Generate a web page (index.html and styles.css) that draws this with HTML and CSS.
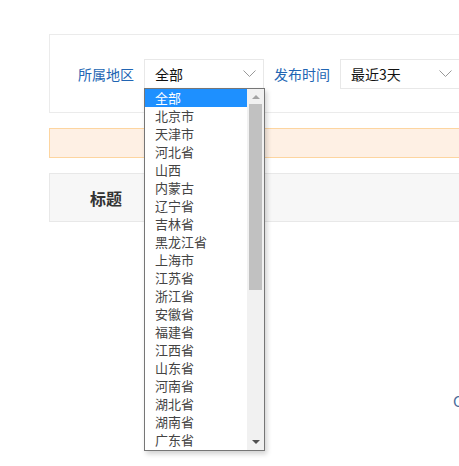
FILE: index.html
```html
<!DOCTYPE html>
<html lang="zh-CN">
<head>
    <meta charset="UTF-8">
    <meta name="viewport" content="width=device-width, initial-scale=1.0">
    <title>信息列表</title>
    <link rel="stylesheet" href="styles.css">
</head>
<body>
    <div class="page">

        <!-- 筛选条件 -->
        <div class="filter">
            <span class="filter-label">所属地区</span>
            <div class="select-wrap">
                <div class="select">
                    <span>全部</span>
                    <svg class="chevron" width="13" height="8" viewBox="0 0 13 8"><path d="M0.5 0.5 L6.5 6.5 L12.5 0.5" fill="none" stroke="#999" stroke-width="1"/></svg>
                </div>
                <div class="dropdown">
                    <ul class="options">
                        <li class="active">全部</li>
                        <li>北京市</li>
                        <li>天津市</li>
                        <li>河北省</li>
                        <li>山西</li>
                        <li>内蒙古</li>
                        <li>辽宁省</li>
                        <li>吉林省</li>
                        <li>黑龙江省</li>
                        <li>上海市</li>
                        <li>江苏省</li>
                        <li>浙江省</li>
                        <li>安徽省</li>
                        <li>福建省</li>
                        <li>江西省</li>
                        <li>山东省</li>
                        <li>河南省</li>
                        <li>湖北省</li>
                        <li>湖南省</li>
                        <li>广东省</li>
                    </ul>
                    <div class="scrollbar">
                        <div class="arrow arrow-up"></div>
                        <div class="thumb"></div>
                        <div class="arrow arrow-down"></div>
                    </div>
                </div>
            </div>
            <span class="filter-label">发布时间</span>
            <div class="select-wrap">
                <div class="select">
                    <span>最近3天</span>
                    <svg class="chevron" width="13" height="8" viewBox="0 0 13 8"><path d="M0.5 0.5 L6.5 6.5 L12.5 0.5" fill="none" stroke="#999" stroke-width="1"/></svg>
                </div>
            </div>
        </div>

        <!-- 提示条 -->
        <div class="notice"></div>

        <!-- 表头 -->
        <div class="table-head">
            <span class="th-title">标题</span>
        </div>

        <div class="pager">C</div>
    </div>
</body>
</html>
```

FILE: styles.css
```css
html, body {
    height: 100%;
}
body {
    margin: 0;
    overflow: hidden;
    background: #fff;
    font-family: "Noto Sans CJK SC", "Microsoft YaHei", sans-serif;
    color: #333;
}
.page {
    box-sizing: border-box;
    width: 1000px;
    min-height: 466px;
    padding: 34px 0 0 49px;
}
.filter {
    display: flex;
    align-items: center;
    gap: 10px;
    border: 1px solid #ebebeb;
    padding: 24px 28px 23px;
}
.filter-label {
    font-size: 14px;
    color: #2165b3;
    line-height: 30px;
}
.select-wrap {
    position: relative;
}
.select {
    box-sizing: border-box;
    width: 120px;
    height: 30px;
    border: 1px solid #e8e8e8;
    display: flex;
    align-items: center;
    justify-content: space-between;
    padding: 0 7px 0 10px;
    font-size: 14px;
    color: #111;
}
.chevron {
    display: block;
}
.dropdown {
    position: absolute;
    top: 29px;
    left: 0;
    z-index: 10;
    box-sizing: border-box;
    width: 121px;
    height: 363px;
    border: 1px solid #767676;
    background: #fff;
    display: flex;
    box-shadow: 2px 3px 5px rgba(0, 0, 0, 0.18);
}
.options {
    flex: 1;
    list-style: none;
    margin: 0;
    padding: 0;
}
.options li {
    height: 18px;
    line-height: 18px;
    padding-left: 10px;
    font-size: 13px;
    color: #444;
}
.options li.active {
    background: #1e90ff;
    color: #fff;
}
.scrollbar {
    width: 17px;
    background: #f1f1f1;
    display: flex;
    flex-direction: column;
    align-items: center;
}
.arrow {
    width: 0;
    height: 0;
    border-left: 4px solid transparent;
    border-right: 4px solid transparent;
}
.arrow-up {
    margin: 6px 0 5px;
    border-bottom: 4px solid #a3a3a3;
}
.thumb {
    width: 13px;
    height: 186px;
    background: #c1c1c1;
}
.arrow-down {
    margin-top: auto;
    margin-bottom: 6px;
    border-top: 4px solid #505050;
}
.notice {
    margin-top: 15px;
    height: 28px;
    background: #fef0e4;
    border: 1px solid #fdd5a0;
}
.table-head {
    margin-top: 15px;
    height: 47px;
    background: #f7f7f7;
    border: 1px solid #e8e8e8;
    display: flex;
    align-items: center;
    padding-left: 40px;
}
.th-title {
    font-size: 16px;
    font-weight: bold;
    color: #333;
}
.pager {
    margin-top: 168px;
    padding-left: 404px;
    font-size: 15px;
    color: #4a6a9a;
}
```
